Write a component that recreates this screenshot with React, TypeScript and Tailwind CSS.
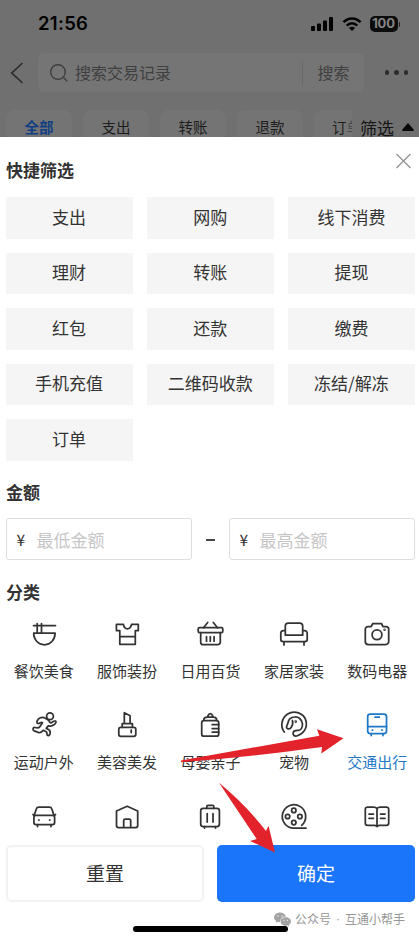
import type { ReactNode } from "react";

const quickFilters = [
  "支出", "网购", "线下消费",
  "理财", "转账", "提现",
  "红包", "还款", "缴费",
  "手机充值", "二维码收款", "冻结/解冻",
  "订单",
];

const tabs = ["全部", "支出", "转账", "退款"];

type Category = { id: string; label?: string; active?: boolean; icon: ReactNode };

const categories: Category[] = [
  {
    id: "food",
    label: "餐饮美食",
    icon: <path d="M3.5 5.5h22M7.2 3.5V13M11.5 3.5V13M3.7 13h21.4c0 7-4.8 11.8-10.7 11.8S3.7 20 3.7 13Z" />,
  },
  {
    id: "clothes",
    label: "服饰装扮",
    icon: <path d="M3.4 4.4h7c.5 3 2 4.4 4 4.4s3.600-1.400 4.100-4.400h6.800v6.200h-3v13.700H6.800V10.600H3.400ZM6.800 16.700h15.500" />,
  },
  {
    id: "grocery",
    label: "日用百货",
    icon: (
      <>
        <rect x="2.200" y="7.700" width="24.600" height="4.800" rx="1.300" />
        <path d="M4.700 12.500v9.700a2.500 2.500 0 0 0 2.500 2.500h14.600a2.500 2.500 0 0 0 2.500-2.500v-9.700M7.500 7.700 11.700 2.500M21.500 7.700 17.300 2.500M10.500 16.700v4.500M14.300 16.700v4.500M18.100 16.700v4.500" />
      </>
    ),
  },
  {
    id: "home",
    label: "家居家装",
    icon: (
      <path d="M5.300 15.200V6A3 3 0 0 1 8.300 3h11.400a3 3 0 0 1 3 3v9.200ZM5.300 10.500H3.500a2.700 2.700 0 0 0-2.700 2.700v6a2.300 2.300 0 0 0 2.300 2.300h21.800a2.300 2.300 0 0 0 2.300-2.300v-6a2.700 2.700 0 0 0-2.700-2.700h-1.800M4 21.500V25M24 21.500V25" />
    ),
  },
  {
    id: "digital",
    label: "数码电器",
    icon: (
      <>
        <path d="M5 6.500h3.200L9.800 3.500h8.600L20 6.500h3a2.700 2.700 0 0 1 2.700 2.700v12.300a3 3 0 0 1-3 3H5.300a3 3 0 0 1-3-3V9.200A2.700 2.700 0 0 1 5 6.500Z" />
        <circle cx="14" cy="14.800" r="4.900" />
        <circle cx="21.600" cy="9.800" r=".4" />
      </>
    ),
  },
  {
    id: "sport",
    label: "运动户外",
    icon: (
      <>
        <circle cx="20" cy="5.200" r="3.400" />
        <path d="M7.800 12.500C5.800 12 7.600 8 9.800 7c1.800-.9 3.900-.8 5.600.2l3.500 2.300c.6 2.500 1.800 2.800 3.600 1.500 1.500-1.200 3.500-1.500 3.500.1 0 2-3.500 4-5.500 4l-2.300-.2-2 2.500c2 .8 4 2 4 3.500 0 1.500-.2 3.600-1.900 3.600-2.300 0-.8-2.600-2-3.800l-3.100-1.500c-1.500 2.200-3.200 2.800-5 2.200l-4-1.500c-2-.8-1.200-3.700.6-3.400 3 .7 4 .8 5-.8l2.700-4c-1.800-1-3.100 1.200-4.700.8Z" />
      </>
    ),
  },
  {
    id: "beauty",
    label: "美容美发",
    icon: (
      <>
        <rect x="5.800" y="16.300" width="17" height="9" rx="2" />
        <path d="M9.200 16.300v-3.600h10.200v3.600M11.300 12.700V1.700l5.800 3v8M18.200 19v2.500" />
      </>
    ),
  },
  {
    id: "baby",
    label: "母婴亲子",
    icon: (
      <>
        <rect x="5.700" y="9.500" width="17" height="15.700" rx="2.300" />
        <path d="M7.700 9.300C7.700 7 9 6 11.300 6h6c2.200 0 3.400 1 3.400 3.300M11.300 6c1-1.200.9-3.500 3-3.500s2 2.300 3 3.500M16.200 13.700h6.500M16.200 17.500h6.500M16.200 21.200h6.500" />
      </>
    ),
  },
  {
    id: "pet",
    label: "宠物",
    icon: (
      <>
        <path d="M4.300 21C0 15.500 1.500 7.300 7.300 3.300c7-4.600 16.700-1.300 18.700 6.700C27.700 17 23.500 23 16.700 25c-2 .5-4-.8-3.600-3.100.3-2.200 2.200-2.700 5-2.500 3 .2 4.800-3.200 4.300-6.800-.6-4.300-4-7-7.800-6.600-4.200.3-6.200 3.200-6.600 5.800L6.600 15.500c-.7 2.500 3 3.400 4.600 1 1.500-2.300 2-4.500 1.200-7" />
        <circle cx="15.700" cy="10.500" r=".5" />
      </>
    ),
  },
  {
    id: "transport",
    label: "交通出行",
    active: true,
    icon: (
      <>
        <rect x="4.700" y="3" width="18.800" height="19.500" rx="2.500" />
        <path d="M4.700 15.700h18.800M12 6.200h4.300M8.200 22.500v2M20 22.500v2M9.200 19h.4M18.800 19h.4" />
      </>
    ),
  },
  {
    id: "car",
    icon: (
      <>
        <path d="M4.300 12.300 6.400 5.800A2.500 2.500 0 0 1 8.800 4h10.600a2.500 2.500 0 0 1 2.400 1.800l2.100 6.500M3 11.500l1 .8" />
        <rect x="3.900" y="12.300" width="20.700" height="9.200" rx="2" />
        <path d="M7.500 21.500v2M21 21.500v2M8.800 17h.3M19.600 17h.3M25.500 11.500l-1 .8" />
      </>
    ),
  },
  {
    id: "housing",
    icon: (
      <path d="M14.200 3.200 24.700 8v14.600a2 2 0 0 1-2 2H5.500a2 2 0 0 1-2-2V8ZM10.700 24.600v-7.100a1.500 1.500 0 0 1 1.500-1.500h4a1.500 1.500 0 0 1 1.500 1.500v7.100" />
    ),
  },
  {
    id: "travel",
    icon: (
      <>
        <rect x="4.700" y="5.300" width="18.700" height="18.200" rx="2.500" />
        <path d="M10.800 5.300V3.400a1 1 0 0 1 1-1h5a1 1 0 0 1 1 1v1.900M11.200 10.700V19M17 10.700V19M8.500 23.500v1.500M19.500 23.500v1.500" />
      </>
    ),
  },
  {
    id: "leisure",
    icon: (
      <>
        <path d="M14 25.200A11.700 11.700 0 1 1 21.700 22.300M14 25.200h12" />
        <circle cx="13.800" cy="7.400" r="2.200" />
        <circle cx="7.600" cy="13.500" r="2.200" />
        <circle cx="19.900" cy="13.500" r="2.200" />
        <circle cx="13.800" cy="19.600" r="2.200" />
      </>
    ),
  },
  {
    id: "education",
    icon: (
      <path d="M14 5.500C13 4.300 12 4 10.800 4H4.600a2.300 2.300 0 0 0-2.300 2.300V20a2.300 2.300 0 0 0 2.300 2.300h7.200L14 23.500l2.200-1.200h7.200a2.300 2.300 0 0 0 2.300-2.300V6.300A2.300 2.300 0 0 0 23.400 4h-6.200C16 4 15 4.300 14 5.500ZM14 5.500v18M6 11h4.500M6 15.300h4.500M17.500 11H22M17.500 15.300H22" />
    ),
  },
];

function StatusBar() {
  return (
    <div className="flex h-12 items-center pl-[38px] pr-[19px] text-black">
      <span className="font-['Inter'] text-[18.5px] font-semibold tracking-[0.3px]">21:56</span>
      <div className="ml-auto flex items-center gap-2">
        <svg width="23" height="14" viewBox="0 0 23 14" fill="currentColor">
          <rect x="0" y="9" width="4" height="5" rx="1" />
          <rect x="6" y="6.500" width="4" height="7.500" rx="1" />
          <rect x="12" y="3.500" width="4" height="10.500" rx="1" />
          <rect x="18" y="0" width="4" height="14" rx="1" />
        </svg>
        <svg width="20" height="14" viewBox="0 0 20 14" fill="none" stroke="currentColor" strokeWidth="2.500">
          <path d="M1.500 5.200C6.500.2 13.500.2 18.500 5.200M4.800 8.600c3-3 7.400-3 10.400 0" />
          <path d="M7 11c1.700-1.600 4.300-1.600 6 0l-3 3Z" fill="currentColor" stroke="none" />
        </svg>
        <div className="flex items-center gap-px">
          <span className="flex h-4 w-[28px] items-center justify-center rounded-[5px] bg-[#0c0c0c] font-['Inter'] text-[13px] font-bold tracking-[-0.2px] text-[#858585]">
            100
          </span>
          <span className="h-[5px] w-[1.500px] rounded-r bg-[#222]" />
        </div>
      </div>
    </div>
  );
}

function Header() {
  return (
    <header className="h-[137px] shrink-0 overflow-hidden bg-[#707070]">
      <StatusBar />
      <div className="flex h-[49px] items-center pl-[10px] pr-[11px]">
        <svg width="14" height="22" viewBox="0 0 14 22" fill="none" stroke="#2c2c2c" strokeWidth="1.700">
          <path d="M12.500 1 1.800 11l10.700 10" />
        </svg>
        <div className="ml-[14px] flex h-[39px] w-[326px] items-center rounded-md bg-[#757575] pl-[11px] text-[16px] text-[#3f3f3f]">
          <svg width="20" height="20" viewBox="0 0 20 20" fill="none" stroke="currentColor" strokeWidth="1.400">
            <circle cx="9" cy="9" r="7.300" />
            <path d="m14.200 14.200 4.100 4.100" />
          </svg>
          <span className="ml-[6px] pb-[2px]">搜索交易记录</span>
          <span className="ml-auto h-6 w-px bg-[#696969]" />
          <span className="w-[61px] pb-[2px] text-center">搜索</span>
        </div>
        <div className="ml-auto flex gap-[5px]">
          <i className="size-[4.500px] rounded-full bg-[#2c2c2c]" />
          <i className="size-[4.500px] rounded-full bg-[#2c2c2c]" />
          <i className="size-[4.500px] rounded-full bg-[#2c2c2c]" />
        </div>
      </div>
      <div className="flex pl-[6px] pt-[13px] text-[14.500px] leading-[33px] text-[#1d1d1d]">
        {tabs.map((tab, i) => (
          <span
            key={tab}
            className={
              i === 0
                ? "mr-[11px] h-[34px] w-[66px] shrink-0 rounded-lg bg-[#747474] text-center font-bold text-[#123f83]"
                : "mr-[11px] h-[34px] w-[66px] shrink-0 rounded-lg bg-[#747474] text-center"
            }
          >
            {tab}
          </span>
        ))}
        <span className="h-[34px] w-[38px] shrink-0 overflow-hidden whitespace-nowrap rounded-l-lg bg-[#747474] pl-[18px]">
          订<span className="text-[#4c4c4c]">单</span>
        </span>
        <span className="ml-[8px] flex h-[34px] shrink-0 items-center text-[17px] text-[#151515]">
          筛选
          <svg className="ml-[8px]" width="12" height="8" viewBox="0 0 12 8" fill="#080808">
            <path d="M6 0 12 7Q12 8 11 8H1Q0 8 0 7Z" />
          </svg>
        </span>
      </div>
    </header>
  );
}

function AmountInput({ placeholder }: { placeholder: string }) {
  return (
    <div className="flex h-[42px] w-[186.500px] items-center rounded-[3px] border border-[#dedede] pl-[10px] pt-[2px]">
      <span className="w-[20px] text-[15.500px] text-[#333]">¥</span>
      <span className="text-[17px] text-[#c6c6c6]">{placeholder}</span>
    </div>
  );
}

function CategoryItem({ label, icon, active }: Category) {
  return (
    <div className={active ? "flex h-[91.500px] flex-col items-center text-[#1e78c8]" : "flex h-[91.500px] flex-col items-center text-[#333]"}>
      <svg
        width="28"
        height="28"
        viewBox="0 0 28 28"
        className="shrink-0 overflow-visible"
        fill="none"
        stroke="currentColor"
        strokeWidth="1.750"
        strokeLinejoin="round"
        strokeLinecap="round"
      >
        {icon}
      </svg>
      {label && <span className="mt-[11px] text-[15px] leading-6">{label}</span>}
    </div>
  );
}

export default function App() {
  return (
    <div className="relative flex h-[937px] w-[419px] flex-col overflow-hidden bg-white font-['Noto_Sans_CJK_SC',sans-serif] text-[#333]">
      <Header />

      <main className="h-[708px] shrink-0 overflow-hidden">
        <div className="flex h-[60px] justify-between pl-[6px] pr-[8px]">
          <h2 className="mt-[20px] text-[17px] font-bold leading-[26px]">快捷筛选</h2>
          <svg className="mt-[16px]" width="15" height="16" viewBox="0 0 15 16" stroke="#929292" strokeWidth="1.300">
            <path d="m.5 1 14 14M14.500 1l-14 14" />
          </svg>
        </div>
        <div className="grid grid-cols-3 gap-[14px] pl-[5.500px] pr-[4px]">
          {quickFilters.map((name) => (
            <div key={name} className="flex h-[41.500px] items-center justify-center bg-[#f5f5f5] pb-[3px] text-[17px]">
              {name}
            </div>
          ))}
        </div>

        <h2 className="mt-[18px] pl-[6px] text-[17px] font-bold leading-[26px]">金额</h2>
        <div className="mt-[13px] flex items-center pl-[5.500px] pr-[4px]">
          <AmountInput placeholder="最低金额" />
          <span className="mx-auto mt-[3px] h-[1.500px] w-[9px] bg-[#444]" />
          <AmountInput placeholder="最高金额" />
        </div>

        <h2 className="mt-[19px] pl-[6px] text-[17px] font-bold leading-[26px]">分类</h2>
        <div className="mt-[15px] grid grid-cols-5 pl-[2px]">
          {categories.map((c) => (
            <CategoryItem key={c.id} {...c} />
          ))}
        </div>
      </main>

      <footer className="flex grow flex-col bg-white">
        <div className="flex gap-[13px] pl-[6px] pr-[4px] text-[19px]">
          <button className="h-[57px] w-[198px] rounded-[5px] border-2 border-[#f2f2f2]">重置</button>
          <button className="h-[57px] flex-1 rounded-[5px] bg-[#1b75fb] text-white">确定</button>
        </div>
        <div className="mt-[7px] flex h-5 items-center justify-end pr-[14px] text-[12px] text-[#969696]">
          <svg className="mr-[4px]" width="17" height="15" viewBox="0 0 18 15" fill="#a3a3a3">
            <path d="M6.500 0C2.900 0 0 2.300 0 5.200c0 1.700 1 3.100 2.400 4.100L1.800 11.200l2.300-1.200c.8.200 1.600.3 2.400.3C6.200 7 8.800 4.500 12.700 4.300 12 1.800 9.500 0 6.500 0Z" />
            <path d="M12.400 5.200C9.300 5.200 7 7.200 7 9.700s2.300 4.500 5.400 4.500c.7 0 1.300-.1 1.900-.3l1.900 1-.5-1.700c1.400-.8 2.300-2.100 2.300-3.500 0-2.500-2.500-4.500-5.600-4.500Z" />
            <g fill="#eee">
              <circle cx="4.300" cy="3.700" r=".8" />
              <circle cx="8.700" cy="3.700" r=".8" />
              <circle cx="10.600" cy="8.400" r=".7" />
              <circle cx="14.200" cy="8.400" r=".7" />
            </g>
          </svg>
          <span>公众号</span>
          <span className="w-[14px] text-center font-['Liberation_Sans']">·</span>
          <span>互通小帮手</span>
        </div>
      </footer>

      {/* home indicator */}
      <div className="absolute bottom-[5px] left-[133px] h-[6px] w-[155px] rounded-full bg-black" />

      {/* pointer arrows over the sheet */}
      <svg className="pointer-events-none absolute inset-0" width="419" height="937" viewBox="0 0 419 937" fill="#e3232b">
        <path d="M181 760.500 319.300 735.700 317 729.300 343.500 738.300 321.300 753.500 322 747Q250 757 181 762.300Z" />
        <path d="M219 782.800Q247 806 266 831L268.500 825.700 275 852.500 250 841 256.700 839Z" />
      </svg>
    </div>
  );
}
